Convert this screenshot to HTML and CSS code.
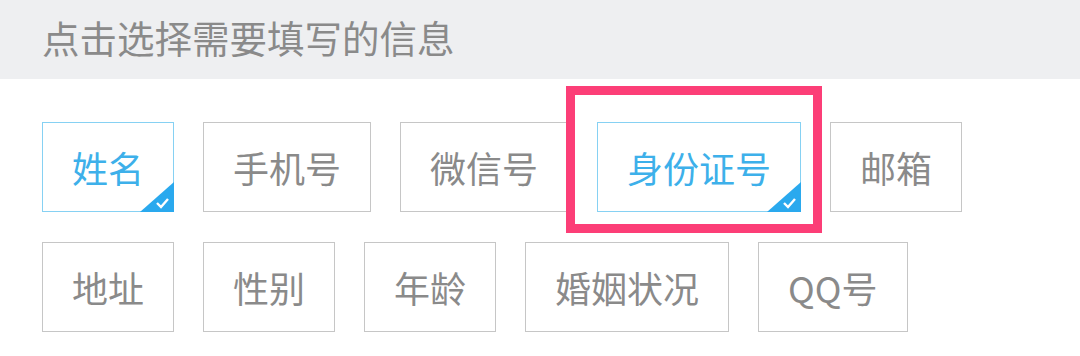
FILE: index.html
```html
<!DOCTYPE html>
<html lang="zh-CN">
  <head>
    <meta charset="UTF-8" />
    <meta name="viewport" content="width=device-width,initial-scale=1" />
    <title>选择信息</title>
    <link rel="stylesheet" href="styles.css">
  </head>
  <body>
    <div class="header">点击选择需要填写的信息</div>
    <div class="tags">
      <div class="row">
        <div class="tag selected">姓名<svg class="mark" viewBox="0 0 34 30"><polygon points="34,0 34,30 0,30" fill="#2aa9ee"/><path d="M17 21 l4 4 l7 -8" fill="none" stroke="#fff" stroke-width="2.4"/></svg></div>
        <div class="tag">手机号</div>
        <div class="tag">微信号</div>
        <div class="tag selected highlight">身份证号<svg class="mark" viewBox="0 0 34 30"><polygon points="34,0 34,30 0,30" fill="#2aa9ee"/><path d="M17 21 l4 4 l7 -8" fill="none" stroke="#fff" stroke-width="2.4"/></svg></div>
        <div class="tag">邮箱</div>
      </div>
      <div class="row">
        <div class="tag">地址</div>
        <div class="tag">性别</div>
        <div class="tag">年龄</div>
        <div class="tag">婚姻状况</div>
        <div class="tag">QQ号</div>
      </div>
    </div>
  </body>
</html>
```

FILE: styles.css
```css
body {
  margin: 0;
  padding: 0;
  background-color: #fff;
  font-family: "Noto Sans CJK SC", "Noto Sans", sans-serif;
}

.header {
  height: 79px;
  line-height: 74px;
  padding-left: 42px;
  background-color: #eeeff1;
  color: #8a8a8a;
  font-size: 37.5px;
}

.tags {
  display: flex;
  flex-direction: column;
  gap: 30px;
  padding: 43px 0 0 42px;
}

.row {
  display: flex;
  gap: 29px;
}

.tag {
  position: relative;
  box-sizing: border-box;
  height: 90px;
  padding: 0 29px;
  display: flex;
  align-items: center;
  justify-content: center;
  border: 1.5px solid #c6c6c6;
  color: #8a8a8a;
  font-size: 36px;
}

.tag.selected {
  border-color: #86d1f3;
  color: #3db0ea;
}

.mark {
  position: absolute;
  right: -1px;
  bottom: -1px;
  width: 34px;
  height: 30px;
}

.highlight::after {
  content: "";
  position: absolute;
  left: -32px;
  right: -22px;
  top: -37px;
  bottom: -22px;
  border: 9px solid #fc3e77;
}
```
